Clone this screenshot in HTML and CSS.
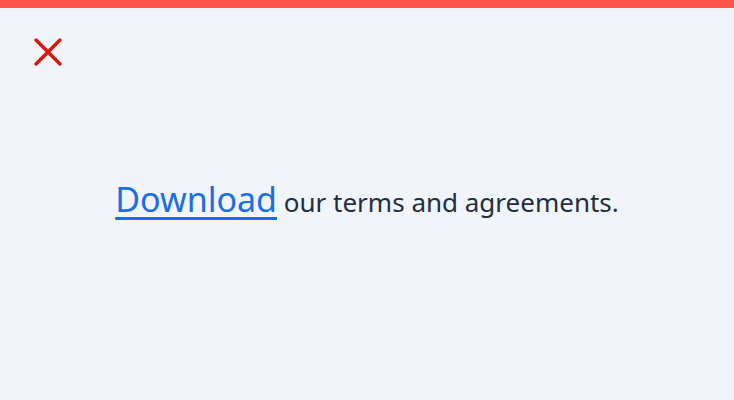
FILE: index.html
```html
<!DOCTYPE html>
<html>
<head>
<meta charset="utf-8">
<link rel="stylesheet" href="styles.css">
</head>
<body>
<div class="topbar"></div>
<div class="page">
  <div class="close">
    <svg width="30" height="30" viewBox="0 0 30 30"><path d="M3 3L27 27M27 3L3 27" stroke="#d91a14" stroke-width="3.5" stroke-linecap="round" fill="none"/></svg>
  </div>
  <p class="message"><a class="link" href="#">Download</a> our terms and agreements.</p>
</div>
</body>
</html>
```
FILE: styles.css
```css
html, body { margin: 0; padding: 0; }
body {
  background: #f1f4f8;
  font-family: "Noto Sans", "Open Sans", sans-serif;
  width: 734px;
  height: 400px;
  overflow: hidden;
}
.topbar { height: 8px; background: #ff5447; }
.page { padding: 29px 0 0 33px; }
.close { width: 30px; height: 30px; display: flex; }
.message {
  margin: 115px 0 0 -33px;
  text-align: center;
  color: #232f3e;
  font-size: 26px;
  line-height: 34px;
}
.link {
  color: #1a6ee8;
  font-size: 34px;
  text-decoration: underline;
  text-decoration-thickness: 3px;
  text-underline-offset: 5px;
}
```
